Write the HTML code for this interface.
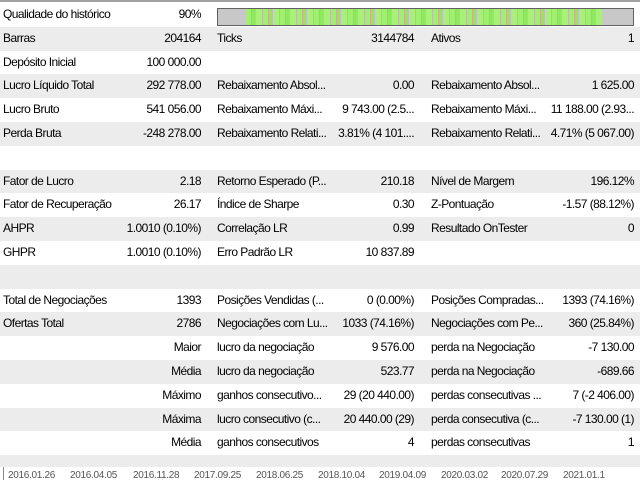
<!DOCTYPE html>
<html><head><meta charset="utf-8"><style>
body{margin:0;width:640px;height:480px;overflow:hidden;background:#fff;font-family:"Liberation Sans",sans-serif;font-size:12px;color:#000;position:relative}
.top{position:absolute;left:0;top:0;width:640px;height:2px;background:#a0a0a0}
.row{position:absolute;left:0;width:640px;height:23.8px}
.g{background:#ececec}
.c{position:absolute;top:0;line-height:23.8px;white-space:nowrap;letter-spacing:-0.55px}
.l1{left:3px}.v1{right:439px;text-align:right}
.l2{left:217px}.v2{right:226px;text-align:right}
.l3{left:431px}.v3{right:6px;text-align:right}
.bar{position:absolute;left:217px;top:5px;width:415px;height:16px;border:1px solid #606060;background:#c8c8c8;overflow:hidden}
.fill{position:absolute;left:28px;top:0;width:356px;height:16px;background:repeating-linear-gradient(90deg,#a0f070 0 5px,#d0b090 5px 6px,#90e860 6px 9px,#c0c0c0 9px 10px,#a8f078 10px 16px,#b8c0a0 16px 17px)}
.axis{position:absolute;left:0;top:467px;width:640px;height:13px;background:#fff;font-size:10px;color:#555}
.axis span{position:absolute;top:3px;letter-spacing:-0.3px}
</style></head><body>
<div class="top"></div>
<div class="row" style="top:3px"><div class="c l1">Qualidade do histórico</div><div class="c v1">90%</div><div class="bar"><div class="fill"></div></div></div>
<div class="row g" style="top:26.8px"><div class="c l1">Barras</div><div class="c v1">204164</div><div class="c l2">Ticks</div><div class="c v2">3144784</div><div class="c l3">Ativos</div><div class="c v3">1</div></div>
<div class="row" style="top:50.6px"><div class="c l1">Depósito Inicial</div><div class="c v1">100 000.00</div></div>
<div class="row g" style="top:74.4px"><div class="c l1">Lucro Líquido Total</div><div class="c v1">292 778.00</div><div class="c l2">Rebaixamento Absol...</div><div class="c v2">0.00</div><div class="c l3">Rebaixamento Absol...</div><div class="c v3">1 625.00</div></div>
<div class="row" style="top:98.2px"><div class="c l1">Lucro Bruto</div><div class="c v1">541 056.00</div><div class="c l2">Rebaixamento Máxi...</div><div class="c v2">9 743.00 (2.5...</div><div class="c l3">Rebaixamento Máxi...</div><div class="c v3">11 188.00 (2.93...</div></div>
<div class="row g" style="top:122px"><div class="c l1">Perda Bruta</div><div class="c v1">-248 278.00</div><div class="c l2">Rebaixamento Relati...</div><div class="c v2">3.81% (4 101....</div><div class="c l3">Rebaixamento Relati...</div><div class="c v3">4.71% (5 067.00)</div></div>
<div class="row" style="top:145.8px"></div>
<div class="row g" style="top:169.6px"><div class="c l1">Fator de Lucro</div><div class="c v1">2.18</div><div class="c l2">Retorno Esperado (P...</div><div class="c v2">210.18</div><div class="c l3">Nível de Margem</div><div class="c v3">196.12%</div></div>
<div class="row" style="top:193.4px"><div class="c l1">Fator de Recuperação</div><div class="c v1">26.17</div><div class="c l2">Índice de Sharpe</div><div class="c v2">0.30</div><div class="c l3">Z-Pontuação</div><div class="c v3">-1.57 (88.12%)</div></div>
<div class="row g" style="top:217.2px"><div class="c l1">AHPR</div><div class="c v1">1.0010 (0.10%)</div><div class="c l2">Correlação LR</div><div class="c v2">0.99</div><div class="c l3">Resultado OnTester</div><div class="c v3">0</div></div>
<div class="row" style="top:241px"><div class="c l1">GHPR</div><div class="c v1">1.0010 (0.10%)</div><div class="c l2">Erro Padrão LR</div><div class="c v2">10 837.89</div></div>
<div class="row g" style="top:264.8px"></div>
<div class="row" style="top:288.6px"><div class="c l1">Total de Negociações</div><div class="c v1">1393</div><div class="c l2">Posições Vendidas (...</div><div class="c v2">0 (0.00%)</div><div class="c l3">Posições Compradas...</div><div class="c v3">1393 (74.16%)</div></div>
<div class="row g" style="top:312.4px"><div class="c l1">Ofertas Total</div><div class="c v1">2786</div><div class="c l2">Negociações com Lu...</div><div class="c v2">1033 (74.16%)</div><div class="c l3">Negociações com Pe...</div><div class="c v3">360 (25.84%)</div></div>
<div class="row" style="top:336.2px"><div class="c v1">Maior</div><div class="c l2">lucro da negociação</div><div class="c v2">9 576.00</div><div class="c l3">perda na Negociação</div><div class="c v3">-7 130.00</div></div>
<div class="row g" style="top:360px"><div class="c v1">Média</div><div class="c l2">lucro da negociação</div><div class="c v2">523.77</div><div class="c l3">perda na Negociação</div><div class="c v3">-689.66</div></div>
<div class="row" style="top:383.8px"><div class="c v1">Máximo</div><div class="c l2">ganhos consecutivo...</div><div class="c v2">29 (20 440.00)</div><div class="c l3">perdas consecutivas ...</div><div class="c v3">7 (-2 406.00)</div></div>
<div class="row g" style="top:407.6px"><div class="c v1">Máxima</div><div class="c l2">lucro consecutivo (c...</div><div class="c v2">20 440.00 (29)</div><div class="c l3">perda consecutiva (c...</div><div class="c v3">-7 130.00 (1)</div></div>
<div class="row" style="top:431.4px"><div class="c v1">Média</div><div class="c l2">ganhos consecutivos</div><div class="c v2">4</div><div class="c l3">perdas consecutivas</div><div class="c v3">1</div></div>
<div class="row g" style="top:455.2px"></div>
<div class="axis"><div style="position:absolute;left:3px;top:0;width:1px;height:13px;background:#888"></div>
<span style="left:8px">2016.01.26</span><span style="left:70px">2016.04.05</span><span style="left:133px">2016.11.28</span><span style="left:194px">2017.09.25</span><span style="left:256px">2018.06.25</span><span style="left:318px">2018.10.04</span><span style="left:379px">2019.04.09</span><span style="left:441px">2020.03.02</span><span style="left:501px">2020.07.29</span><span style="left:563px">2021.01.1</span></div>
</body></html>
